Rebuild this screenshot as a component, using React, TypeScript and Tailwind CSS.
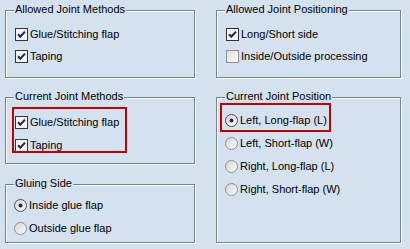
import React from "react";

const BG = "bg-[#d4e2ef]";

function Group({
  title,
  className,
  children,
}: {
  title: string;
  className: string;
  children: React.ReactNode;
}) {
  return (
    <div
      className={`relative border border-[#74849a] shadow-[inset_1px_1px_0_#ffffff,1px_1px_0_#ffffff] ${className}`}
    >
      <span
        className={`absolute -top-[8px] left-[8px] px-[1px] leading-[13px] ${BG}`}
      >
        {title}
      </span>
      {children}
    </div>
  );
}

function CheckBox({ checked, label }: { checked: boolean; label: string }) {
  return (
    <div className="flex h-[13px] items-center gap-[2px] leading-[13px]">
      <svg width="13" height="13" viewBox="0 0 13 13" className="shrink-0">
        <defs>
          <linearGradient id="cbg" x1="0" y1="0" x2="1" y2="1">
            <stop offset="0" stopColor="#dcdcdc" />
            <stop offset="1" stopColor="#ffffff" />
          </linearGradient>
        </defs>
        <rect
          x="0.5"
          y="0.5"
          width="12"
          height="12"
          fill={checked ? "#f4f4f4" : "url(#cbg)"}
          stroke={checked ? "#333333" : "#8e8f8f"}
        />
        {checked ? (
          <path
            d="M3 6.3 L5.3 8.8 L10 3.6"
            fill="none"
            stroke="#1e2f55"
            strokeWidth="2.1"
          />
        ) : null}
      </svg>
      <span>{label}</span>
    </div>
  );
}

function Radio({ checked, label }: { checked: boolean; label: string }) {
  return (
    <div className="flex h-[13px] items-center gap-[2px] leading-[13px]">
      <svg width="13" height="13" viewBox="0 0 13 13" className="shrink-0">
        <defs>
          <linearGradient id="rbg" x1="0" y1="0" x2="1" y2="1">
            <stop offset="0" stopColor="#d6d6d6" />
            <stop offset="1" stopColor="#fbfbfb" />
          </linearGradient>
        </defs>
        <circle
          cx="6.5"
          cy="6.5"
          r="6"
          fill="url(#rbg)"
          stroke={checked ? "#4d4d4d" : "#8e8f8f"}
        />
        {checked ? <circle cx="6.5" cy="6.5" r="2" fill="#1c2b4c" /> : null}
      </svg>
      <span>{label}</span>
    </div>
  );
}

export default function App() {
  return (
    <div
      className={`relative flex h-[249px] w-[410px] gap-[21px] overflow-hidden pl-[5px] pt-[10px] text-[11px] text-black ${BG}`}
      style={{ fontFamily: '"Liberation Sans", Arial, sans-serif' }}
    >
      <div className="flex w-[190px] flex-col">
        <Group title="Allowed Joint Methods" className="h-[68px] pl-[9px] pt-[17px]">
          <div className="flex flex-col gap-[9px]">
            <CheckBox checked label="Glue/Stitching flap" />
            <CheckBox checked label="Taping" />
          </div>
        </Group>
        <Group title="Current Joint Methods" className="mt-[19px] h-[67px] pl-[9px] pt-[18px]">
          <div className="flex flex-col gap-[10px]">
            <CheckBox checked label="Glue/Stitching flap" />
            <CheckBox checked label="Taping" />
          </div>
        </Group>
        <Group title="Gluing Side" className="mt-[20px] h-[59px] pl-[8px] pt-[14px]">
          <div className="flex flex-col gap-[10px]">
            <Radio checked label="Inside glue flap" />
            <Radio checked={false} label="Outside glue flap" />
          </div>
        </Group>
      </div>
      <div className="flex w-[185px] flex-col">
        <Group title="Allowed Joint Positioning" className="h-[68px] pl-[9px] pt-[17px]">
          <div className="flex flex-col gap-[9px]">
            <CheckBox checked label="Long/Short side" />
            <CheckBox checked={false} label="Inside/Outside processing" />
          </div>
        </Group>
        <Group title="Current Joint Position" className="mt-[19px] h-[146px] pl-[8px] pt-[16px]">
          <div className="flex flex-col gap-[10px]">
            <Radio checked label="Left, Long-flap (L)" />
            <Radio checked={false} label="Left, Short-flap (W)" />
            <Radio checked={false} label="Right, Long-flap (L)" />
            <Radio checked={false} label="Right, Short-flap (W)" />
          </div>
        </Group>
      </div>
      <div className="pointer-events-none absolute left-[12px] top-[107px] h-[46px] w-[115px] border-2 border-[#c20000]" />
      <div className="pointer-events-none absolute left-[220px] top-[103px] h-[29px] w-[111px] border-2 border-[#c20000]" />
    </div>
  );
}
